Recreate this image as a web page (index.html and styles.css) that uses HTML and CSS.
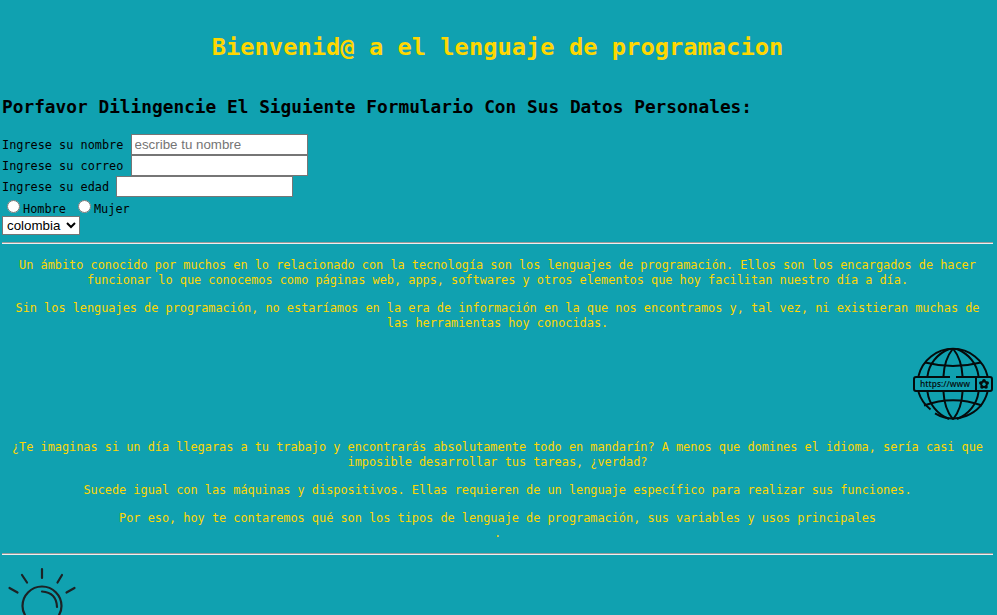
FILE: index.html
```html
<!DOCTYPE html>
<html lang="es">
<head>
<meta charset="utf-8">
<title>Lenguajes de programacion</title>
<link rel="stylesheet" href="styles.css">
</head>
<body>
<h1>Bienvenid@ a el lenguaje de programacion</h1>
<h2>Porfavor Dilingencie El Siguiente Formulario Con Sus Datos Personales:</h2>
<form>
  <div class="field"><label for="nombre">Ingrese su nombre&nbsp;</label><input class="text" id="nombre" type="text" placeholder="escribe tu nombre"></div>
  <div class="field"><label for="correo">Ingrese su correo&nbsp;</label><input class="text" id="correo" type="email"></div>
  <div class="field"><label for="edad">Ingrese su edad&nbsp;</label><input class="text" id="edad" type="text"></div>
  <div class="choices"><input type="radio" name="genero" id="h"><label for="h">Hombre&nbsp;</label><input type="radio" name="genero" id="m"><label for="m">Mujer</label></div>
  <div class="country"><select><option>colombia</option></select></div>
</form>
<hr>
<p>Un ámbito conocido por muchos en lo relacionado con la tecnología son los lenguajes de programación. Ellos son los encargados de hacer<br>funcionar lo que conocemos como páginas web, apps, softwares y otros elementos que hoy facilitan nuestro día a día.</p>
<p>Sin los lenguajes de programación, no estaríamos en la era de información en la que nos encontramos y, tal vez, ni existieran muchas de<br>las herramientas hoy conocidas.</p>
<div class="globe">
  <svg width="80" height="80" viewBox="0 0 80 80" fill="none" stroke="#050b0c" stroke-width="2">
    <path d="M5.500 30A35.500 35.500 0 0 1 74.500 30M5.500 46A35.500 35.500 0 0 0 17.500 63.500M22 67.300A35.500 35.500 0 0 0 74.500 46"/>
    <path d="M40 2.500C34 10 31 19 30.500 30M40 2.500C46 10 49 19 49.500 30M30.500 46C31 57 34 66 40 73.500M49.500 46C49 57 46 66 40 73.500M36 3C24 8 16 18 14.500 30M44 3C56 8 64 18 65.500 30M14.500 46C16 58 24 68 36 73M65.500 46C64 58 56 68 44 73"/>
    <path d="M12 16.500Q40 23.500 68 16.500M11 59.500Q40 49 69 59.500"/>
    <path d="M37 31H3Q1 31 1 33V43Q1 45 3 45H77Q79 45 79 43V33Q79 31 77 31H43M63 31V45"/>
    <g fill="#050b0c" stroke="none"><circle cx="71" cy="34.800" r="1.800"/><circle cx="74.200" cy="37" r="1.800"/><circle cx="73" cy="41" r="1.800"/><circle cx="69" cy="41" r="1.800"/><circle cx="67.800" cy="37" r="1.800"/></g>
    <circle cx="71" cy="38.200" r="2.800" stroke-width="1.800"/>
    <text class="url" x="7" y="40.500" textLength="50" lengthAdjust="spacingAndGlyphs">https://www</text>
  </svg>
</div>
<p>¿Te imaginas si un día llegaras a tu trabajo y encontrarás absolutamente todo en mandarín? A menos que domines el idioma, sería casi que<br>imposible desarrollar tus tareas, ¿verdad?</p>
<p>Sucede igual con las máquinas y dispositivos. Ellas requieren de un lenguaje específico para realizar sus funciones.</p>
<p>Por eso, hoy te contaremos qué son los tipos de lenguaje de programación, sus variables y usos principales<br>.</p>
<hr class="last">
<div class="bulb">
  <svg width="80" height="52" viewBox="0 0 80 52" fill="none" stroke="#1c2225" stroke-width="2.200" stroke-linecap="round">
    <path d="M40 6V15M20 12L25 19.500M60 12L55.500 19.500M7.500 25L15.500 29.500M72.500 25L64.500 29.500"/>
    <path d="M23 52Q20.500 48 20.500 43A19.500 19.500 0 0 1 59.500 43Q59.500 48 57 52"/>
    <path d="M40 28.500Q54.500 29.500 55 44"/>
  </svg>
</div>
</body>
</html>
```
FILE: styles.css
```css
body {
  margin: 0 4px 0 2px;
  background: #10a1b0;
  color: #000;
  font-family: "DejaVu Sans Mono", monospace;
  font-size: 11.871px;
  line-height: 15px;
}

h1 {
  margin: 0;
  padding: 32px 0 33px;
  color: #ffd700;
  font-size: 23.742px;
  line-height: 30px;
  text-align: center;
}

h2 {
  margin: 0 0 16px;
  font-size: 17.807px;
  line-height: 23px;
}

.field {
  display: flex;
  align-items: center;
  height: 21px;
}

.field label {
  padding-top: 2px;
}

.text {
  box-sizing: border-box;
  width: 177px;
  height: 21px;
  margin: 0;
  padding: 1px 3px;
  border: 1px solid #767676;
  background: #fff;
  font: 13.333px "Liberation Sans", sans-serif;
}

.choices {
  display: flex;
  height: 19px;
  line-height: 24px;
}

.choices input {
  width: 13px;
  height: 13px;
  margin: 3px 3px 0 5px;
}

.country {
  height: 19px;
}

select {
  display: block;
  width: 78px;
  height: 19px;
  margin: 0;
  padding: 0;
  border: 1px solid #767676;
  border-radius: 0;
  background: #fff;
  font: 13.333px "Liberation Sans", sans-serif;
}

hr {
  height: 0;
  margin: 7px 0 14px;
  border: 0 solid;
  border-width: 1px 0;
  border-color: #9a9a9a transparent #eee;
}

p {
  margin: 0 0 13px;
  color: #ffd700;
  text-align: center;
}

.globe {
  display: flex;
  justify-content: flex-end;
  height: 94px;
  padding-top: 2px;
}

.url {
  fill: #050b0c;
  stroke: none;
  font: 600 8px "Open Sans", sans-serif;
}

.last {
  margin: -1px 0 8px;
}

.bulb {
  height: 52px;
}

.bulb svg {
  display: block;
}
```
